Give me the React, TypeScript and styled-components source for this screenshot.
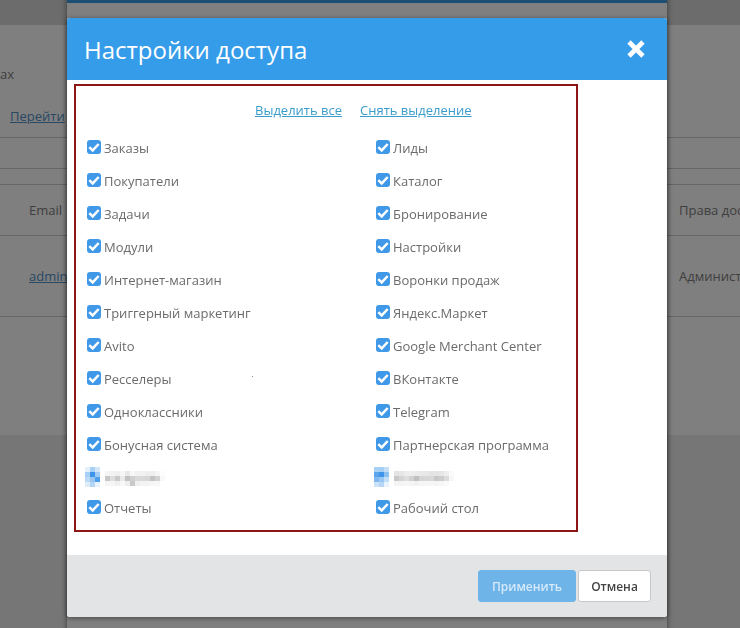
import React from "react";
import styled, { createGlobalStyle } from "styled-components";

const GlobalStyle = createGlobalStyle`
	html, body {
		margin: 0;
		padding: 0;
		height: 100%;
		overflow: hidden;
		background: #ededed;
		font-family: "Open Sans", "Liberation Sans", sans-serif;
	}
`;

const Page = styled.div`
	width: 740px;
	height: 628px;
	overflow: hidden;
`;

const TopBar = styled.div`
	height: 25px;
	background: #d8d8d8;
`;

const Content = styled.div`
	height: 410px;
	background: #ffffff;
	font-size: 13px;
	color: #808080;
`;

const Intro = styled.div`
	height: 113px;
	box-sizing: border-box;
	padding-top: 40px;
	border-bottom: 1px solid #cccccc;
	line-height: 18px;
`;

const PageLink = styled.a`
	display: block;
	margin: 24px 0 0 10px;
	color: #5090c8;
	text-decoration: underline;
`;

const AdminLink = styled.a`
	color: #5090c8;
	text-decoration: underline;
`;

const Spacer = styled.div`
	height: ${(props: { $h: number }) => props.$h}px;
	box-sizing: border-box;
	border-bottom: 1px solid #cccccc;
`;

const TableRow = styled.div`
	height: ${(props: { $h: number }) => props.$h}px;
	box-sizing: border-box;
	border-bottom: 1px solid #cccccc;
	display: flex;
	align-items: center;
	justify-content: space-between;
	padding-left: 29px;
	white-space: nowrap;
`;

const RightCell = styled.span`
	width: 61px;
	overflow: hidden;
`;

const Shade = styled.div`
	position: fixed;
	inset: 0;
	background: rgba(0, 0, 0, 0.5);
`;

const BackModal = styled.div`
	position: fixed;
	left: 67px;
	top: -40px;
	width: 600px;
	height: 720px;
	background: #ffffff;
	border-top: 43px solid #3a9ee8;
	box-shadow: 0 0 6px rgba(0, 0, 0, 0.5);
`;

const Modal = styled.div`
	position: fixed;
	left: 67px;
	top: 18px;
	width: 600px;
	height: 599px;
	display: flex;
	flex-direction: column;
	background: #ffffff;
	border-radius: 3px;
	box-shadow: 0 1px 5px rgba(0, 0, 0, 0.45);
	overflow: hidden;
`;

const ModalHeader = styled.div`
	height: 62px;
	flex: none;
	display: flex;
	align-items: center;
	justify-content: space-between;
	padding: 0 21px 0 17px;
	background: #359cea;
`;

const Title = styled.h2`
	margin: 0;
	font-size: 24px;
	font-weight: 400;
	color: #ffffff;
`;

const CloseIcon = styled.svg`
	display: block;
	width: 20px;
	height: 20px;
`;

const ModalBody = styled.div`
	flex: 1;
	padding: 4px 0 0 7px;
`;

const AccessBox = styled.div`
	width: 504px;
	height: 448px;
	box-sizing: border-box;
	border: 2px solid #8c1515;
	padding: 15px 0 0 11px;
`;

const SelectLinks = styled.div`
	display: flex;
	gap: 18px;
	height: 18px;
	margin-left: 168px;
	margin-bottom: 12px;
	font-size: 13px;
	line-height: 18px;
`;

const SelectLink = styled.a`
	color: #3a9ccb;
	text-decoration: underline;
	white-space: nowrap;
`;

const Columns = styled.div`
	display: grid;
	grid-template-columns: 289px 1fr;
`;

const Column = styled.div`
	display: flex;
	flex-direction: column;
`;

const Row = styled.label`
	height: 33px;
	display: flex;
	align-items: center;
	gap: 3px;
	font-size: 13px;
	color: #6b6b6b;
	white-space: nowrap;
`;

const Check = styled.span`
	width: 14px;
	height: 14px;
	flex: none;
	display: flex;
	align-items: center;
	justify-content: center;
	border-radius: 3px;
	background: #4098e8;
	margin-top: -2px;
`;

const Speck = styled.span`
	width: 1px;
	height: 1px;
	margin: -4px 0 0 77px;
	background: #8a8a8a;
`;

const BlurredRow = styled.div`
	height: 30px;
	box-sizing: border-box;
	padding-top: 6px;
	margin-left: -2px;
	display: flex;
	align-items: flex-start;
`;

const Mosaic = styled.svg`
	display: block;
`;

const ModalFooter = styled.div`
	height: 62px;
	flex: none;
	box-sizing: border-box;
	display: flex;
	justify-content: flex-end;
	align-items: flex-start;
	gap: 2px;
	padding: 15px 16px 0 0;
	background: #e3e4e6;
`;

const FooterButton = styled.button<{ $primary?: boolean }>`
	height: 32px;
	box-sizing: border-box;
	padding: 0;
	width: ${(props) => (props.$primary ? "98px" : "73px")};
	border-radius: 3px;
	border: 1px solid ${(props) => (props.$primary ? "#6fb4e9" : "#c8c8c8")};
	background: ${(props) => (props.$primary ? "#6fb4e9" : "#ffffff")};
	color: ${(props) => (props.$primary ? "#d5e9fa" : "#444444")};
	font-family: inherit;
	font-size: 12px;
	font-weight: 600;
`;

const leftColumn = ["Заказы", "Покупатели", "Задачи", "Модули", "Интернет-магазин", "Триггерный маркетинг", "Avito", "Ресселеры", "Одноклассники", "Бонусная система"];
const rightColumn = ["Лиды", "Каталог", "Бронирование", "Настройки", "Воронки продаж", "Яндекс.Маркет", "Google Merchant Center", "ВКонтакте", "Telegram", "Партнерская программа"];

const leftIconCells = [
	["#e4f0fb", "#a9d1f5", "#d3e7f9"],
	["#a8d0f4", "#3e94e8", "#a2ccf3"],
	["#bcdaf6", "#9ac7f2", "#4e9ded"],
	["#deecfa", "#b5d6f5", "#e8f3fc"],
];
const rightIconCells = [
	["#a9d1f5", "#a4cef4", "#c3dff7"],
	["#5ba4ec", "#3e94e8", "#8cc0f0"],
	["#7fb8ef", "#9ac7f2", "#c3dff7"],
	["#c9e2f8", "#b5d6f5", "#e8f3fc"],
];
const leftTextCells = [
	["#f4f4f4", "#f2f2f2", "#efefef", "#f6f6f6", "#e8e8e8", "#f7f7f7", "#f2f2f2", "#f2f2f2", "#efefef", "#efefef", "#f5f5f5", "#fcfcfc"],
	["#c8c8c8", "#dedede", "#c9c9c9", "#e9e9e9", "#c2c2c2", "#cfcfcf", "#dadada", "#d9d9d9", "#d6d6d6", "#c4c4c4", "#d2d2d2", "#f8f8f8"],
	["#f6f6f6", "#f6f6f6", "#f0f0f0", "#f8f8f8", "#eeeeee", "#c9c9c9", "#efefef", "#f4f4f4", "#f4f4f4", "#f7f7f7", "#f7f7f7", "#ffffff"],
];
const rightTextCells = [
	["#e4e4e4", "#e6e6e6", "#ececec", "#eeeeee", "#ebebeb", "#e8e8e8", "#e8e8e8", "#e4e4e4", "#e4e4e4", "#e6e6e6", "#eeeeee", "#fbfbfb"],
	["#c8c8c8", "#d4d4d4", "#dedede", "#d2d2d2", "#c0c0c0", "#d4d4d4", "#d6d6d6", "#d8d8d8", "#c8c8c8", "#cdcdcd", "#dcdcdc", "#f8f8f8"],
	["#f4f4f4", "#f4f4f4", "#f6f6f6", "#f4f4f4", "#f2f2f2", "#f6f6f6", "#f6f6f6", "#f6f6f6", "#f4f4f4", "#f6f6f6", "#fafafa", "#ffffff"],
];

const Pixelated = ({ icon, text }: { icon: string[][]; text: string[][] }) => (
	<Mosaic width="80" height="20" viewBox="0 0 80 20" shapeRendering="crispEdges">
		{icon.map((row, y) =>
			row.map((fill, x) => <rect key={`i${x}-${y}`} x={x * 5} y={y * 5} width="5" height="5" fill={fill} />)
		)}
		{text.map((row, y) =>
			row.map((fill, x) => <rect key={`t${x}-${y}`} x={20 + x * 5} y={4 + y * 5} width="5" height="5" fill={fill} />)
		)}
	</Mosaic>
);

const CheckItem = ({ label, speck }: { label: string; speck?: boolean }) => (
	<Row>
		<Check>
			<svg width="12" height="12" viewBox="0 0 12 12">
				<path d="M1.3 6.2 L4.7 9.4 L10.7 3" fill="none" stroke="#ffffff" strokeWidth="2.5" />
			</svg>
		</Check>
		{label}
		{speck && <Speck />}
	</Row>
);

const App = () => {
	return (
		<>
			<GlobalStyle />
			<Page>
				<TopBar />
				<Content>
					<Intro>
						ах
						<PageLink>Перейти</PageLink>
					</Intro>
					<Spacer $h={31} />
					<Spacer $h={16} />
					<TableRow $h={51}>
						<span>Email</span>
						<RightCell>Права доступа</RightCell>
					</TableRow>
					<TableRow $h={81}>
						<AdminLink>admin</AdminLink>
						<RightCell>Администратор</RightCell>
					</TableRow>
				</Content>
			</Page>
			<BackModal />
			<Shade />
			<Modal>
				<ModalHeader>
					<Title>Настройки доступа</Title>
					<CloseIcon viewBox="0 0 20 20">
						<path d="M3 3 L17 17 M17 3 L3 17" stroke="#ffffff" strokeWidth="4.6" fill="none" />
					</CloseIcon>
				</ModalHeader>
				<ModalBody>
					<AccessBox>
						<SelectLinks>
							<SelectLink>Выделить все</SelectLink>
							<SelectLink>Снять выделение</SelectLink>
						</SelectLinks>
						<Columns>
							<Column>
								{leftColumn.map((label) => (
									<CheckItem key={label} label={label} speck={label === "Ресселеры"} />
								))}
								<BlurredRow>
									<Pixelated icon={leftIconCells} text={leftTextCells} />
								</BlurredRow>
								<CheckItem label="Отчеты" />
							</Column>
							<Column>
								{rightColumn.map((label) => (
									<CheckItem key={label} label={label} />
								))}
								<BlurredRow>
									<Pixelated icon={rightIconCells} text={rightTextCells} />
								</BlurredRow>
								<CheckItem label="Рабочий стол" />
							</Column>
						</Columns>
					</AccessBox>
				</ModalBody>
				<ModalFooter>
					<FooterButton $primary>Применить</FooterButton>
					<FooterButton>Отмена</FooterButton>
				</ModalFooter>
			</Modal>
		</>
	);
};

export default App;
